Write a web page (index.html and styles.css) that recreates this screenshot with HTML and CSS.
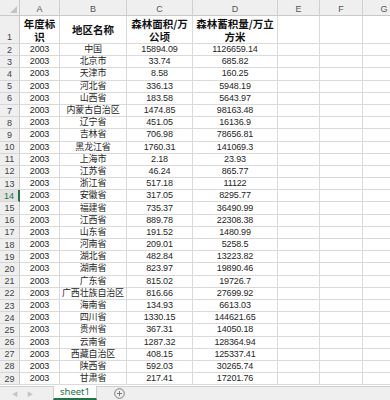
FILE: index.html
```html
<!DOCTYPE html>
<html lang="zh">
<head>
<meta charset="utf-8">
<link rel="stylesheet" href="styles.css">
</head>
<body>
<div class="app">
  <div class="sheet">
    <div class="corner"><span class="tri"></span></div>
    <div class="ch">A</div><div class="ch">B</div><div class="ch">C</div><div class="ch">D</div><div class="ch">E</div><div class="ch">F</div><div class="ch">G</div>

    <div class="rh rh1">1</div>
    <div class="c hd">年度标<br>识</div><div class="c hd">地区名称</div><div class="c hd">森林面积/万<br>公顷</div><div class="c hd">森林蓄积量/万立<br>方米</div><div class="c"></div><div class="c"></div><div class="c"></div>

    <div class="rh">2</div><div class="c">2003</div><div class="c">中国</div><div class="c">15894.09</div><div class="c">1126659.14</div><div class="c"></div><div class="c"></div><div class="c"></div>
    <div class="rh">3</div><div class="c">2003</div><div class="c">北京市</div><div class="c">33.74</div><div class="c">685.82</div><div class="c"></div><div class="c"></div><div class="c"></div>
    <div class="rh">4</div><div class="c">2003</div><div class="c">天津市</div><div class="c">8.58</div><div class="c">160.25</div><div class="c"></div><div class="c"></div><div class="c"></div>
    <div class="rh">5</div><div class="c">2003</div><div class="c">河北省</div><div class="c">336.13</div><div class="c">5948.19</div><div class="c"></div><div class="c"></div><div class="c"></div>
    <div class="rh">6</div><div class="c">2003</div><div class="c">山西省</div><div class="c">183.58</div><div class="c">5643.97</div><div class="c"></div><div class="c"></div><div class="c"></div>
    <div class="rh">7</div><div class="c">2003</div><div class="c">内蒙古自治区</div><div class="c">1474.85</div><div class="c">98163.48</div><div class="c"></div><div class="c"></div><div class="c"></div>
    <div class="rh">8</div><div class="c">2003</div><div class="c">辽宁省</div><div class="c">451.05</div><div class="c">16136.9</div><div class="c"></div><div class="c"></div><div class="c"></div>
    <div class="rh">9</div><div class="c">2003</div><div class="c">吉林省</div><div class="c">706.98</div><div class="c">78656.81</div><div class="c"></div><div class="c"></div><div class="c"></div>
    <div class="rh">10</div><div class="c">2003</div><div class="c">黑龙江省</div><div class="c">1760.31</div><div class="c">141069.3</div><div class="c"></div><div class="c"></div><div class="c"></div>
    <div class="rh">11</div><div class="c">2003</div><div class="c">上海市</div><div class="c">2.18</div><div class="c">23.93</div><div class="c"></div><div class="c"></div><div class="c"></div>
    <div class="rh">12</div><div class="c">2003</div><div class="c">江苏省</div><div class="c">46.24</div><div class="c">865.77</div><div class="c"></div><div class="c"></div><div class="c"></div>
    <div class="rh">13</div><div class="c">2003</div><div class="c">浙江省</div><div class="c">517.18</div><div class="c">11122</div><div class="c"></div><div class="c"></div><div class="c"></div>
    <div class="rh sel">14</div><div class="c">2003</div><div class="c">安徽省</div><div class="c">317.05</div><div class="c">8295.77</div><div class="c"></div><div class="c"></div><div class="c"></div>
    <div class="rh">15</div><div class="c">2003</div><div class="c">福建省</div><div class="c">735.37</div><div class="c">36490.99</div><div class="c"></div><div class="c"></div><div class="c"></div>
    <div class="rh">16</div><div class="c">2003</div><div class="c">江西省</div><div class="c">889.78</div><div class="c">22308.38</div><div class="c"></div><div class="c"></div><div class="c"></div>
    <div class="rh">17</div><div class="c">2003</div><div class="c">山东省</div><div class="c">191.52</div><div class="c">1480.99</div><div class="c"></div><div class="c"></div><div class="c"></div>
    <div class="rh">18</div><div class="c">2003</div><div class="c">河南省</div><div class="c">209.01</div><div class="c">5258.5</div><div class="c"></div><div class="c"></div><div class="c"></div>
    <div class="rh">19</div><div class="c">2003</div><div class="c">湖北省</div><div class="c">482.84</div><div class="c">13223.82</div><div class="c"></div><div class="c"></div><div class="c"></div>
    <div class="rh">20</div><div class="c">2003</div><div class="c">湖南省</div><div class="c">823.97</div><div class="c">19890.46</div><div class="c"></div><div class="c"></div><div class="c"></div>
    <div class="rh">21</div><div class="c">2003</div><div class="c">广东省</div><div class="c">815.02</div><div class="c">19726.7</div><div class="c"></div><div class="c"></div><div class="c"></div>
    <div class="rh">22</div><div class="c">2003</div><div class="c">广西壮族自治区</div><div class="c">816.66</div><div class="c">27699.92</div><div class="c"></div><div class="c"></div><div class="c"></div>
    <div class="rh">23</div><div class="c">2003</div><div class="c">海南省</div><div class="c">134.93</div><div class="c">6613.03</div><div class="c"></div><div class="c"></div><div class="c"></div>
    <div class="rh">24</div><div class="c">2003</div><div class="c">四川省</div><div class="c">1330.15</div><div class="c">144621.65</div><div class="c"></div><div class="c"></div><div class="c"></div>
    <div class="rh">25</div><div class="c">2003</div><div class="c">贵州省</div><div class="c">367.31</div><div class="c">14050.18</div><div class="c"></div><div class="c"></div><div class="c"></div>
    <div class="rh">26</div><div class="c">2003</div><div class="c">云南省</div><div class="c">1287.32</div><div class="c">128364.94</div><div class="c"></div><div class="c"></div><div class="c"></div>
    <div class="rh">27</div><div class="c">2003</div><div class="c">西藏自治区</div><div class="c">408.15</div><div class="c">125337.41</div><div class="c"></div><div class="c"></div><div class="c"></div>
    <div class="rh">28</div><div class="c">2003</div><div class="c">陕西省</div><div class="c">592.03</div><div class="c">30265.74</div><div class="c"></div><div class="c"></div><div class="c"></div>
    <div class="rh">29</div><div class="c">2003</div><div class="c">甘肃省</div><div class="c">217.41</div><div class="c">17201.76</div><div class="c"></div><div class="c"></div><div class="c"></div>
  </div>
  <div class="tabbar">
    <div class="nav"><span class="arr">&#9664;</span><span class="arr">&#9654;</span></div>
    <div class="tab">sheet1</div>
    <div class="add">
      <svg width="11" height="11" viewBox="0 0 11 11"><circle cx="5.5" cy="5.5" r="4.8" fill="none" stroke="#7a7a7a" stroke-width="1"/><path d="M5.5 3v5M3 5.5h5" stroke="#7a7a7a" stroke-width="1"/></svg>
    </div>
  </div>
</div>
</body>
</html>
```
FILE: styles.css
```css
* { box-sizing: border-box; }
html, body { margin: 0; padding: 0; background: #fff; }
.app {
  width: 390px;
  height: 400px;
  overflow: hidden;
  display: flex;
  flex-direction: column;
  font-family: "Liberation Sans", "Noto Sans CJK SC", sans-serif;
  color: #222;
}
.sheet {
  flex: 0 0 auto;
  display: grid;
  grid-template-columns: 20px 40px 67px 66px 85px 42px 43px 43px;
  grid-template-rows: 16px 28px repeat(28, 12.2px);
  width: 406px;
  height: 386px;
  overflow: hidden;
}
.corner {
  background: #efefef;
  border-right: 1px solid #c9c9c9;
  border-bottom: 1px solid #c9c9c9;
  position: relative;
}
.tri {
  position: absolute;
  right: 2px;
  bottom: 2px;
  width: 0; height: 0;
  border-left: 7px solid transparent;
  border-bottom: 7px solid #c3c3c3;
}
.ch {
  background: #efefef;
  border-right: 1px solid #cfcfcf;
  border-bottom: 1px solid #c9c9c9;
  font-size: 9px;
  color: #555;
  display: flex;
  align-items: flex-end;
  justify-content: center;
  padding-bottom: 1px;
  line-height: 10px;
}
.rh {
  background: #efefef;
  border-right: 1px solid #c9c9c9;
  border-bottom: 1px solid #d6d6d6;
  font-size: 9px;
  color: #444;
  display: flex;
  align-items: center;
  justify-content: center;
  line-height: 10px;
}
.rh1 { align-items: flex-end; padding-bottom: 1px; }
.rh.sel {
  background: #e2e2e2;
  border-right: 2px solid #217346;
  color: #217346;
}
.c {
  border-right: 1px solid #dadada;
  border-bottom: 1px solid #dadada;
  font-size: 9px;
  letter-spacing: -0.15px;
  line-height: 11px;
  display: flex;
  align-items: center;
  justify-content: center;
  text-align: center;
  white-space: nowrap;
  color: #262626;
}
.c.hd {
  font-family: "Noto Sans CJK SC", sans-serif;
  font-weight: 700;
  font-size: 10.5px;
  letter-spacing: 0;
  line-height: 12.5px;
  padding-top: 2px;
  color: #111;
  white-space: normal;
}
.tabbar {
  flex: 1 1 auto;
  background: #efefef;
  border-top: 1px solid #cfcfcf;
  display: flex;
  align-items: stretch;
}
.nav {
  width: 53px;
  display: flex;
  align-items: center;
  gap: 9px;
  padding-left: 12px;
}
.arr { font-size: 6px; color: #c4c4c4; line-height: 6px; }
.tab {
  width: 44px;
  background: #fff;
  border-left: 1px solid #cfcfcf;
  border-right: 1px solid #cfcfcf;
  border-bottom: 2px solid #217346;
  margin-top: -1px;
  color: #217346;
  font-family: "Noto Sans", sans-serif;
  font-size: 9.5px;
  display: flex;
  align-items: center;
  justify-content: center;
  line-height: 10px;
}
.add {
  margin-left: 17px;
  display: flex;
  align-items: center;
}
```
